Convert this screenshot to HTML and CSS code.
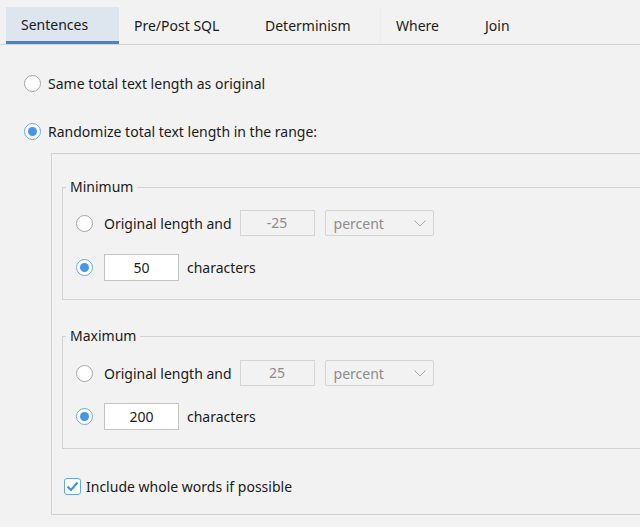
FILE: index.html
```html
<!DOCTYPE html>
<html lang="en">
<head>
    <meta charset="UTF-8">
    <title>Sentences</title>
    <link rel="stylesheet" href="styles.css">
</head>
<body>
    <div class="tabs">
        <div class="tab active" style="width: 113px;">Sentences</div>
        <div class="tab" style="width: 131px;">Pre/Post SQL</div>
        <div class="tab sep" style="width: 131px;">Determinism</div>
        <div class="tab" style="width: 89px;">Where</div>
        <div class="tab" style="width: 80px;">Join</div>
    </div>

    <div class="content">
        <label class="row top">
            <span class="radio"></span>
            <span>Same total text length as original</span>
        </label>
        <label class="row top second">
            <span class="radio checked"></span>
            <span>Randomize total text length in the range:</span>
        </label>

        <div class="group">
            <fieldset class="box">
                <legend>Minimum</legend>
                <div class="row">
                    <span class="radio"></span>
                    <span class="label">Original length and</span>
                    <span class="field disabled">-25</span>
                    <span class="select">percent<svg width="12" height="7" viewBox="0 0 12 7"><path d="M0.5 0.5 L6 6 L11.5 0.5" fill="none" stroke="#a8a8a8" stroke-width="1"/></svg></span>
                </div>
                <div class="row gap">
                    <span class="radio checked"></span>
                    <span class="field">50</span>
                    <span class="label">characters</span>
                </div>
            </fieldset>

            <fieldset class="box max">
                <legend>Maximum</legend>
                <div class="row">
                    <span class="radio"></span>
                    <span class="label">Original length and</span>
                    <span class="field disabled">25</span>
                    <span class="select">percent<svg width="12" height="7" viewBox="0 0 12 7"><path d="M0.5 0.5 L6 6 L11.5 0.5" fill="none" stroke="#a8a8a8" stroke-width="1"/></svg></span>
                </div>
                <div class="row gap">
                    <span class="radio checked"></span>
                    <span class="field">200</span>
                    <span class="label">characters</span>
                </div>
            </fieldset>

            <label class="check-row">
                <span class="check"><svg width="13" height="11" viewBox="0 0 13 11"><path d="M1.5 5.5 L5 9 L11.5 1.5" fill="none" stroke="#3f8fe0" stroke-width="2"/></svg></span>
                <span>Include whole words if possible</span>
            </label>
        </div>
    </div>
</body>
</html>
```

FILE: styles.css
```css
html, body {
    margin: 0;
    height: 527px;
    overflow: hidden;
}
body {
    background: #f2f2f2;
    font-family: "Noto Sans", sans-serif;
    font-size: 14px;
    color: #1a1a1a;
}
.tabs {
    display: flex;
    margin-top: 7px;
    padding-left: 6px;
    height: 37px;
    border-bottom: 1px solid #d4d4d4;
}
.tab {
    box-sizing: border-box;
    padding-left: 15px;
    line-height: 37px;
    white-space: nowrap;
}
.tab.active {
    background: #dde5ee;
    border-bottom: 3px solid #3f86cc;
    line-height: 36px;
}
.tab.sep {
    border-right: 1px solid #ececec;
}
.content {
    padding: 26px 0 0 24px;
}
.row {
    display: flex;
    align-items: center;
    height: 28px;
}
.row.top {
    height: 24px;
}
.row.top .radio {
    margin-right: 7px;
}
.row.second {
    margin-top: 24px;
}
.radio {
    box-sizing: border-box;
    width: 17px;
    height: 17px;
    border: 1px solid #a6a6a6;
    border-radius: 50%;
    background: #fff;
    flex: none;
    margin-right: 11px;
    display: flex;
    align-items: center;
    justify-content: center;
}
.radio.checked {
    border: 1px solid #6aa6e8;
}
.radio.checked::after {
    content: "";
    width: 9px;
    height: 9px;
    border-radius: 50%;
    background: #4596e6;
}
.group {
    margin: 10px -40px 0 27px;
    border: 1px solid #d2d2d2;
    padding: 23px 0 18px 10px;
}
.box {
    margin: 0;
    border: 1px solid #d2d2d2;
    border-right: none;
    padding: 12px 0 18px 13px;
}
.box.max {
    margin-top: 26px;
    padding-top: 13px;
}
.box.max .row.gap {
    margin-top: 15px;
}
.box legend {
    padding: 0 4px;
    margin-left: -10px;
    line-height: 20px;
}
.row.gap {
    margin-top: 16px;
}
.field {
    box-sizing: border-box;
    width: 75px;
    height: 27px;
    line-height: 25px;
    text-align: center;
    background: #fff;
    border: 1px solid #c4c4c4;
    margin-right: 8px;
}
.field.disabled {
    background: #f2f2f2;
    border-color: #d4d4d4;
    color: #8c8c8c;
    height: 26px;
    line-height: 24px;
    margin-right: 10px;
}
.label {
    margin-right: 8px;
}
.select {
    box-sizing: border-box;
    width: 109px;
    height: 26px;
    display: flex;
    align-items: center;
    justify-content: space-between;
    padding: 0 7px 0 8px;
    border: 1px solid #d4d4d4;
    border-radius: 2px;
    color: #8c8c8c;
}
.check-row {
    display: flex;
    align-items: center;
    height: 20px;
    margin: 27px 0 0 2px;
}
.check {
    box-sizing: border-box;
    width: 17px;
    height: 17px;
    border: 1.5px solid #6aa6e8;
    border-radius: 3px;
    background: #fff;
    display: flex;
    align-items: center;
    justify-content: center;
    margin-right: 5px;
}
```
